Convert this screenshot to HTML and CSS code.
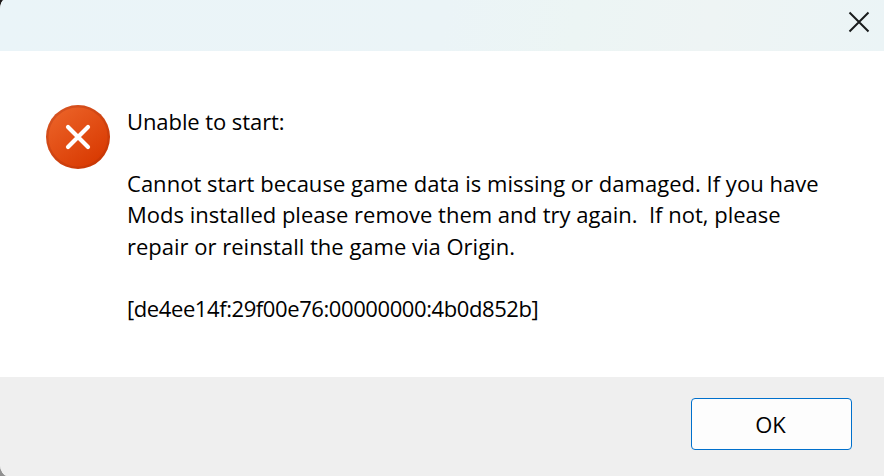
FILE: index.html
```html
<!DOCTYPE html>
<html lang="en">
<head>
  <meta charset="UTF-8">
  <title>Unable to start</title>
  <link rel="stylesheet" href="styles.css">
</head>
<body>
  <div class="dialog">
    <div class="titlebar">
      <svg class="close" width="22" height="22" viewBox="0 0 22 22">
        <path d="M1.5 1.5 L20.5 20.5 M20.5 1.5 L1.5 20.5" stroke="#191b1c" stroke-width="2" fill="none"/>
      </svg>
    </div>

    <div class="content">
      <svg class="error-icon" width="64" height="64" viewBox="0 0 64 64">
        <defs>
          <linearGradient id="fill" x1="0.15" y1="0.1" x2="0.8" y2="0.95">
            <stop offset="0" stop-color="#ea6025"/>
            <stop offset="1" stop-color="#d93a02"/>
          </linearGradient>
          <linearGradient id="rim" x1="0.15" y1="0.1" x2="0.8" y2="0.95">
            <stop offset="0" stop-color="#d65220"/>
            <stop offset="1" stop-color="#c93603"/>
          </linearGradient>
        </defs>
        <circle cx="32" cy="32" r="32" fill="url(#rim)"/>
        <circle cx="32" cy="32" r="29.5" fill="url(#fill)"/>
        <path d="M22 22 L42 42 M42 22 L22 42" stroke="#fff" stroke-width="4.2" stroke-linecap="round"/>
      </svg>
      <div class="message">
        <p class="heading">Unable to start:</p>
        <p>
          <span class="line first">Cannot start because game data is missing or damaged. If you have</span>
          <span class="line">Mods installed please remove them and try again.&nbsp; If not, please</span>
          <span class="line">repair or reinstall the game via Origin.</span>
        </p>
        <p class="code">[de4ee14f:29f00e76:00000000:4b0d852b]</p>
      </div>
    </div>

    <div class="footer">
      <button type="button" class="ok">OK</button>
    </div>
  </div>
</body>
</html>
```

FILE: styles.css
```css
body {
  margin: 0;
  background: linear-gradient(#1d1919 50%, #909090 50%);
  font-family: "Segoe UI", "Open Sans", "Noto Sans", sans-serif;
  font-size: 22px;
  color: #000;
}
.dialog {
  display: flex;
  flex-direction: column;
  height: 476px;
  border-radius: 4px 0 0 8px / 10px 0 0 12px;
  overflow: hidden;
  background: #fff;
}
.titlebar {
  display: flex;
  justify-content: flex-end;
  box-sizing: border-box;
  height: 51px;
  padding: 11px 14px 0 0;
  background: linear-gradient(100deg, #eaf4f8 0%, #ebf4f7 50%, #ecf5f4 65%, #eef4f4 80%, #ebf4f6 100%);
}
.content {
  display: flex;
  flex: 1;
  gap: 17px;
  padding: 54px 0 0 46px;
}
.message { padding-top: 0.8px; line-height: 31.2px; }
.message p { margin: 0 0 31.2px; }
.message .heading { letter-spacing: -0.08px; }
.message .code { letter-spacing: -0.41px; }
.line { display: block; white-space: nowrap; }
.first { letter-spacing: 0.02px; }
.footer {
  display: flex;
  justify-content: flex-end;
  box-sizing: border-box;
  height: 99px;
  padding: 21px 32px 0 0;
  background: #efefef;
}
.ok {
  width: 161px;
  height: 52px;
  padding: 0 2px 0 0;
  border: 1px solid #0070cc;
  border-radius: 4px;
  background: #fdfdfd;
  font: inherit;
  color: #000;
}
```
